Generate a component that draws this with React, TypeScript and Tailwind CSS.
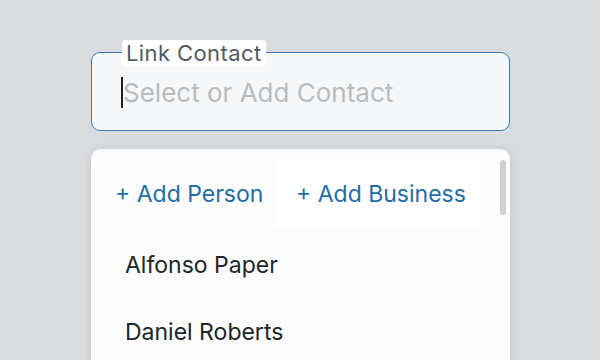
import React from "react";

const contacts = ["Alfonso Paper", "Daniel Roberts"];

const App = () => {
  return (
    <div
      className="w-[600px] h-[360px] overflow-hidden bg-[#d9dcdf] pt-[52px]"
      style={{ fontFamily: "Inter, 'Noto Sans', sans-serif" }}
    >
      <div className="ml-[91px] w-[419px]">
        {/* input field */}
        <div className="relative h-[79px] rounded-[9px] border-[1.5px] border-[#3b7bb1] bg-[#f5f7f9]">
          <span className="absolute -top-[13px] left-[30px] rounded-[3px] bg-white px-[4px] text-[22px] leading-[26px] tracking-[0.4px] text-[#555b60]">
            Link Contact
          </span>
          <div className="flex h-full items-center pl-[29px] pt-[2px]">
            <span className="h-[31px] w-[2px] bg-[#222]" />
            <span className="text-[26px] leading-none text-[#b9bcbf]">
              Select or Add Contact
            </span>
          </div>
        </div>

        {/* dropdown */}
        <div className="relative mt-[18px] h-[240px] rounded-t-[10px] bg-[#fcfcfc] shadow-[0_2px_8px_rgba(0,0,0,0.12)]">
          <div className="absolute right-[4px] top-[11px] h-[55px] w-[6px] rounded-full bg-[#cfd1d3]" />
          <div className="flex items-center pt-[11px] pl-[24px]">
            <button className="h-[68px] w-[160px] text-left text-[23px] text-[#1f6ea6]">
              + Add Person
            </button>
            <button className="h-[68px] w-[206px] rounded-[4px] bg-white pl-[21px] text-left text-[23px] text-[#1f6ea6]">
              + Add Business
            </button>
          </div>
          <div className="mt-[4px] flex flex-col pl-[34px]">
            {contacts.map((name) => (
              <div
                key={name}
                className="flex h-[67px] items-center text-[23px] text-[#222528]"
              >
                {name}
              </div>
            ))}
          </div>
        </div>
      </div>
    </div>
  );
};

export default App;
